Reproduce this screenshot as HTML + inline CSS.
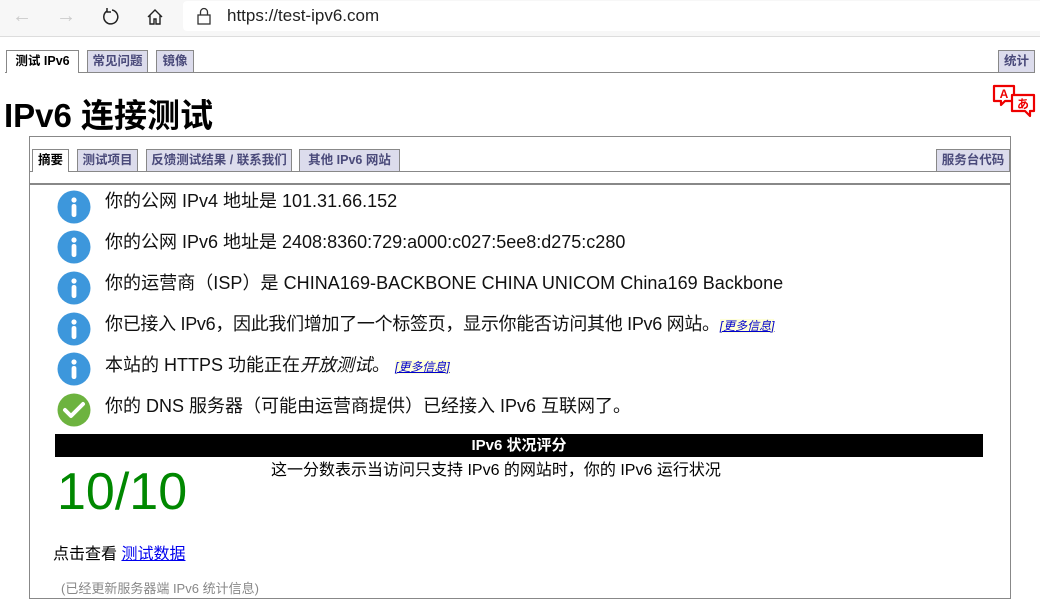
<!DOCTYPE html>
<html><head><meta charset="utf-8"><style>
*{margin:0;padding:0;box-sizing:border-box}
body{width:1040px;height:601px;overflow:hidden;background:#fff;font-family:"Liberation Sans","Noto Sans CJK SC",sans-serif;position:relative;color:#000}
.a{position:absolute;white-space:nowrap}
.tab{position:absolute;height:23px;border:1px solid #888;background:#dcdcec;color:#4a4a7a;font-size:12.5px;font-weight:bold;line-height:21px;text-align:center}
.tab.on{background:#fff;color:#000;border-bottom:none}
.row{position:absolute;left:105px;font-size:18px;line-height:22px;color:#111}
.ic{position:absolute;left:57px;width:34px;height:34px}
.more{font-size:12px;font-style:italic;color:#00c;text-decoration:underline;background:#ffffd8}
</style></head><body>
<div class="a" style="left:0;top:0;width:1040px;height:37px;background:#f7f7f7;border-bottom:1px solid #ddd"></div>
<div class="a" style="left:183px;top:1px;width:857px;height:30px;background:#fff;border-radius:4px 0 0 4px"></div>
<div class="a" style="left:12px;top:5px;font-size:20px;color:#ccc">&#8592;</div>
<div class="a" style="left:56px;top:5px;font-size:20px;color:#ccc">&#8594;</div>
<svg class="a" style="left:101px;top:7px" width="20" height="20" viewBox="0 0 20 20"><path d="M6 4A7 7 0 1 0 11 3" fill="none" stroke="#222" stroke-width="1.5"/><path d="M6 1v4h4" fill="none" stroke="#222" stroke-width="1.5"/></svg>
<svg class="a" style="left:146px;top:8px" width="18" height="18" viewBox="0 0 18 18"><path d="M2 9L9 2l7 7M4 7v9h4v-5h2v5h4V7" fill="none" stroke="#222" stroke-width="1.4"/></svg>
<svg class="a" style="left:196px;top:7px" width="16" height="18" viewBox="0 0 16 18"><rect x="2" y="8" width="12" height="9" fill="none" stroke="#333" stroke-width="1.3"/><path d="M4.5 8V5a3.5 3.5 0 0 1 7 0v3" fill="none" stroke="#333" stroke-width="1.3"/></svg>
<div class="a" style="left:227px;top:6px;font-size:17px;color:#222">https://test-ipv6.com</div>

<div class="a" style="left:5px;top:72px;width:1030px;height:1px;background:#888"></div>
<div class="tab on" style="left:6px;top:50px;width:73px;height:23px">测试 IPv6</div>
<div class="tab" style="left:87px;top:50px;width:61px">常见问题</div>
<div class="tab" style="left:156px;top:50px;width:38px">镜像</div>
<div class="tab" style="left:998px;top:50px;width:37px">统计</div>

<svg class="a" style="left:992px;top:84px" width="46" height="36" viewBox="0 0 46 36"><path d="M2 2h20v15h-9l-4 4v-4H2z" fill="#fff" stroke="#e00" stroke-width="2.2" stroke-linejoin="round"/><text x="12" y="14" font-size="12" font-weight="bold" fill="#e00" text-anchor="middle" font-family="Liberation Sans">A</text><path d="M20 11h22v16h-4v5l-5-5H20z" fill="#fff" stroke="#e00" stroke-width="2.2" stroke-linejoin="round"/><text x="31" y="24" font-size="12" font-weight="bold" fill="#e00" text-anchor="middle" font-family="Noto Sans CJK JP">あ</text></svg>

<div class="a" style="left:4px;top:95px;font-size:33px;font-weight:bold;line-height:42px">IPv6 连接测试</div>

<div class="a" style="left:29px;top:136px;width:982px;height:463px;border:1px solid #888"></div>
<div class="a" style="left:30px;top:171px;width:980px;height:1px;background:#888"></div>
<div class="a" style="left:30px;top:183px;width:980px;height:2px;background:#888"></div>
<div class="tab on" style="left:32px;top:149px;width:37px;height:23px">摘要</div>
<div class="tab" style="left:77px;top:149px;width:61px">测试项目</div>
<div class="tab" style="left:146px;top:149px;width:146px">反馈测试结果 / 联系我们</div>
<div class="tab" style="left:299px;top:149px;width:101px">其他 IPv6 网站</div>
<div class="tab" style="left:936px;top:149px;width:74px">服务台代码</div>

<svg style="display:none"><defs><g id="i"><circle cx="17" cy="17" r="16.5" fill="#3d97dc"/><circle cx="17" cy="10" r="2.6" fill="#fff"/><rect x="14.6" y="14" width="4.8" height="13" rx="2.2" fill="#fff"/></g></defs></svg>
<svg class="ic" style="top:190px" viewBox="0 0 34 34"><use href="#i"/></svg>
<svg class="ic" style="top:230px" viewBox="0 0 34 34"><use href="#i"/></svg>
<svg class="ic" style="top:271px" viewBox="0 0 34 34"><use href="#i"/></svg>
<svg class="ic" style="top:312px" viewBox="0 0 34 34"><use href="#i"/></svg>
<svg class="ic" style="top:352px" viewBox="0 0 34 34"><use href="#i"/></svg>
<svg class="ic" style="top:393px" viewBox="0 0 34 34"><circle cx="17" cy="17" r="16.5" fill="#6db33f"/><path d="M8 17l6 6 12-12" fill="none" stroke="#fff" stroke-width="4" stroke-linecap="round" stroke-linejoin="round"/></svg>

<div class="row" style="top:190px">你的公网 IPv4 地址是 101.31.66.152</div>
<div class="row" style="top:231px">你的公网 IPv6 地址是 2408:8360:729:a000:c027:5ee8:d275:c280</div>
<div class="row" style="top:272px;letter-spacing:0.05px">你的运营商（ISP）是 CHINA169-BACKBONE CHINA UNICOM China169 Backbone</div>
<div class="row" style="top:313px;letter-spacing:-0.3px">你已接入 IPv6，因此我们增加了一个标签页，显示你能否访问其他 IPv6 网站。<span class="more" style="letter-spacing:0">[更多信息]</span></div>
<div class="row" style="top:354px">本站的 HTTPS 功能正在<i>开放测试</i>。 <span class="more">[更多信息]</span></div>
<div class="row" style="top:395px">你的 DNS 服务器（可能由运营商提供）已经接入 IPv6 互联网了。</div>

<div class="a" style="left:55px;top:434px;width:928px;height:23px;background:#000;color:#fff;font-size:15px;font-weight:bold;text-align:center;line-height:23px">IPv6 状况评分</div>
<div class="a" style="left:57px;top:460px;font-size:52px;color:#080;line-height:64px">10/10</div>
<div class="a" style="left:271px;top:461px;font-size:16px;line-height:20px">这一分数表示当访问只支持 IPv6 的网站时，你的 IPv6 运行状况</div>
<div class="a" style="left:53px;top:544px;font-size:16px;line-height:22px">点击查看 <span style="color:#00e;text-decoration:underline">测试数据</span></div>
<div class="a" style="left:61px;top:580px;font-size:13px;color:#888;line-height:18px">(已经更新服务器端 IPv6 统计信息)</div>
</body></html>
